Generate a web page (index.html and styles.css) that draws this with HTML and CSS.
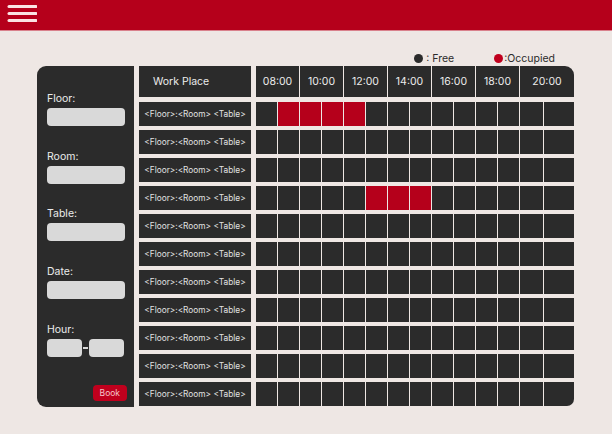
FILE: index.html
```html
<!DOCTYPE html>
<html lang="en">
<head>
  <meta charset="UTF-8" />
  <title>Workplace Booking</title>
  <link rel="stylesheet" href="styles.css">
</head>
<body>

<header class="topbar">
  <svg class="menu" width="30" height="22" viewBox="0 0 30 22">
    <g stroke="#fbe3e3" stroke-width="3" stroke-linecap="round">
      <line x1="2" y1="3.5" x2="29" y2="3.5" />
      <line x1="2" y1="10.5" x2="29" y2="10.5" />
      <line x1="2" y1="17.5" x2="29" y2="17.5" />
    </g>
  </svg>
</header>

<div class="legend">
  <span class="dot"></span><span>: Free</span>
  <span class="dot red"></span><span>:Occupied</span>
</div>

<div class="main">

  <!-- Booking form -->
  <aside class="sidebar">
    <label>Floor:</label>
    <div class="field"></div>
    <label>Room:</label>
    <div class="field"></div>
    <label>Table:</label>
    <div class="field"></div>
    <label>Date:</label>
    <div class="field"></div>
    <label>Hour:</label>
    <div class="hours">
      <div class="field small"></div>
      <span class="dash"></span>
      <div class="field small"></div>
    </div>
    <button class="book">Book</button>
  </aside>

  <div class="places" id="places">
    <div class="place-head">Work Place</div>
  </div>

  <div class="board" id="board">
    <div class="hour">08:00</div>
    <div class="hour">10:00</div>
    <div class="hour">12:00</div>
    <div class="hour">14:00</div>
    <div class="hour">16:00</div>
    <div class="hour">18:00</div>
    <div class="hour last">20:00</div>
  </div>

</div>

<script>
  // occupied slots per row (row index -> cell indexes)
  const occupied = { 0: [1, 2, 3, 4], 3: [5, 6, 7] };
  const places = document.getElementById('places');
  const board = document.getElementById('board');

  for (let r = 0; r < 11; r++) {
    const p = document.createElement('div');
    p.className = 'place';
    p.textContent = '<Floor>:<Room> <Table>';
    places.appendChild(p);

    for (let c = 0; c < 14; c++) {
      const cell = document.createElement('div');
      cell.className = 'slot';
      if (occupied[r] && occupied[r].includes(c)) cell.classList.add('taken');
      if (r === 10 && c === 13) cell.classList.add('corner');
      board.appendChild(cell);
    }
  }
</script>

</body>
</html>
```

FILE: styles.css
```css
body { margin: 0; background: #eee7e4; font-family: Inter, "Noto Sans", sans-serif; color: #2b2b2b; }

.topbar { height: 30px; background: #b5001b; border-bottom: 1px solid #d9818c; padding-left: 7px; display: flex; align-items: center; }
.menu { display: block; margin-top: -3px; }

.legend { height: 35px; display: flex; align-items: center; justify-content: flex-end; padding-right: 57px; font-size: 10.5px; color: #2b2b2b; padding-top: 19px; box-sizing: border-box; }
.legend .dot { width: 9px; height: 9px; border-radius: 50%; background: #2b2b2b; margin-left: 2px; margin-right: 3px; }
.legend .dot.red { background: #c0001d; margin-left: 40px; margin-right: 1px; }

.main { display: flex; gap: 5px; margin-left: 37px; }

.sidebar {
  width: 97px;
  height: 341px;
  background: #2b2b2b;
  border-radius: 9px 0 0 9px;
  padding: 26px 9px 0 10px;
  box-sizing: border-box;
  display: flex;
  flex-direction: column;
}
.sidebar label { color: #ececec; font-size: 10.5px; margin-bottom: 3px; }
.field { height: 18px; width: 78px; background: #d9d9d9; border-radius: 4px; margin-bottom: 23.7px; }
.hours { display: flex; align-items: center; }
.field.small { width: 35px; margin-bottom: 0; }
.dash { width: 5px; height: 2px; background: #d9d9d9; margin: 0 1px; }
.book {
  align-self: flex-end;
  margin-top: 28px;
  margin-right: -2px;
  background: #c0001d;
  color: #f4c3c9;
  border: none;
  border-radius: 4px;
  font-family: inherit;
  font-size: 8.5px;
  padding: 2px 7px;
  height: 16px;
}

.places { width: 112px; display: flex; flex-direction: column; gap: 4px; }
.place-head { height: 31px; margin-bottom: 1px; background: #2b2b2b; color: #ececec; font-size: 10.5px; display: flex; align-items: center; padding-left: 14px; }
.place { height: 24px; background: #2b2b2b; color: #e2e2e2; font-size: 8.3px; display: flex; align-items: center; justify-content: center; white-space: nowrap; }

.board {
  display: grid;
  grid-template-columns: repeat(12, 21px) 23px 30px;
  grid-template-rows: 32px repeat(11, 24px);
  column-gap: 1px;
  row-gap: 4px;
  align-items: start;
}
.hour { grid-column: span 2; height: 31px; background: #2b2b2b; color: #ececec; font-size: 10.5px; display: flex; align-items: center; justify-content: center; }
.hour.last { border-top-right-radius: 9px; }
.slot { height: 24px; background: #2b2b2b; }
.slot.taken { background: #b5001b; }
.slot.corner { border-bottom-right-radius: 7px; }
```
